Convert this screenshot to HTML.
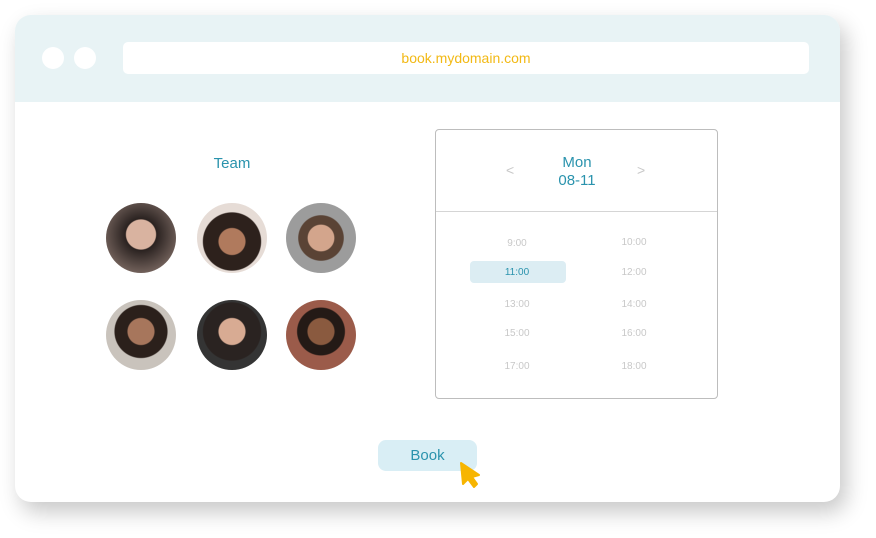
<!DOCTYPE html>
<html><head><style>
body{margin:0;width:876px;height:538px;background:#fff;position:relative;overflow:hidden;font-family:"Liberation Sans",sans-serif}
.a{position:absolute}
.win{left:15px;top:15px;width:825px;height:487px;border-radius:16px;background:#fff;box-shadow:6px 10px 22px rgba(0,0,0,.22);overflow:hidden}
.hdr{left:0;top:0;width:825px;height:87px;background:#e8f3f5}
.dot{width:22px;height:22px;border-radius:50%;background:#fff;top:32px}
.url{left:108px;top:27px;width:686px;height:32px;background:#fff;border-radius:5px;text-align:center;line-height:32px;color:#f2b915;font-size:14px}
.av{width:70px;height:70px;border-radius:50%}
.t{font-size:10px;color:#c8c8c8;width:80px;text-align:center}
</style></head><body>
<div class="a win">
 <div class="a hdr"></div>
 <div class="a dot" style="left:27px"></div>
 <div class="a dot" style="left:59px"></div>
 <div class="a url">book.mydomain.com</div>
</div>
<div class="a" style="left:182px;top:155px;width:100px;text-align:center;color:#2a93ad;font-size:15px">Team</div>
<div class="a av" style="left:106px;top:203px;background:radial-gradient(circle at 50% 45%,#d9b3a0 0 28%,#2a2220 30%,#7c6a63 80%)"></div>
<div class="a av" style="left:197px;top:203px;background:radial-gradient(circle at 50% 55%,#b07a5d 0 25%,#2d211c 27% 55%,#e6dcd6 57%)"></div>
<div class="a av" style="left:286px;top:203px;background:radial-gradient(circle at 50% 50%,#d3a58c 0 26%,#5a4335 28% 45%,#9c9c9c 47%)"></div>
<div class="a av" style="left:106px;top:300px;background:radial-gradient(circle at 50% 45%,#a7765c 0 25%,#2b201b 27% 50%,#c9c3bc 52%)"></div>
<div class="a av" style="left:197px;top:300px;background:radial-gradient(circle at 50% 45%,#d8ab93 0 25%,#2a2321 27% 55%,#343434 57%)"></div>
<div class="a av" style="left:286px;top:300px;background:radial-gradient(circle at 50% 45%,#8a5a3f 0 25%,#241a16 27% 45%,#9b5b4a 47%)"></div>

<div class="a" style="left:435px;top:129px;width:281px;height:268px;border:1px solid #bdbdbd;border-radius:4px"></div>
<div class="a" style="left:436px;top:211px;width:281px;height:1px;background:#d5d5d5"></div>
<div class="a" style="left:536px;top:154px;width:82px;text-align:center;color:#2a93ad;font-size:15px;line-height:18px">Mon<br>08-11</div>
<div class="a" style="left:506px;top:162px;color:#c8c8c8;font-size:14px">&lt;</div>
<div class="a" style="left:637px;top:162px;color:#c8c8c8;font-size:14px">&gt;</div>
<div class="a" style="left:470px;top:261px;width:96px;height:22px;background:#dcedf3;border-radius:4px"></div>
<div class="a t" style="left:477px;top:238px">9:00</div>
<div class="a t" style="left:594px;top:237px">10:00</div>
<div class="a t" style="left:477px;top:267px;color:#2a93ad">11:00</div>
<div class="a t" style="left:594px;top:267px">12:00</div>
<div class="a t" style="left:477px;top:299px">13:00</div>
<div class="a t" style="left:594px;top:299px">14:00</div>
<div class="a t" style="left:477px;top:328px">15:00</div>
<div class="a t" style="left:594px;top:328px">16:00</div>
<div class="a t" style="left:477px;top:361px">17:00</div>
<div class="a t" style="left:594px;top:361px">18:00</div>

<div class="a" style="left:378px;top:440px;width:99px;height:31px;background:#d9eef5;border-radius:8px;text-align:center;line-height:31px;color:#2a93ad;font-size:15px">Book</div>
<svg class="a" style="left:458px;top:460px" width="26" height="30" viewBox="0 0 26 30"><path d="M3 3 L5 24 L10 19 L16 27 L19 24 L14 17 L21 15 Z" fill="#f7b500" stroke="#f7b500" stroke-width="2" stroke-linejoin="round"/></svg>
</body></html>
